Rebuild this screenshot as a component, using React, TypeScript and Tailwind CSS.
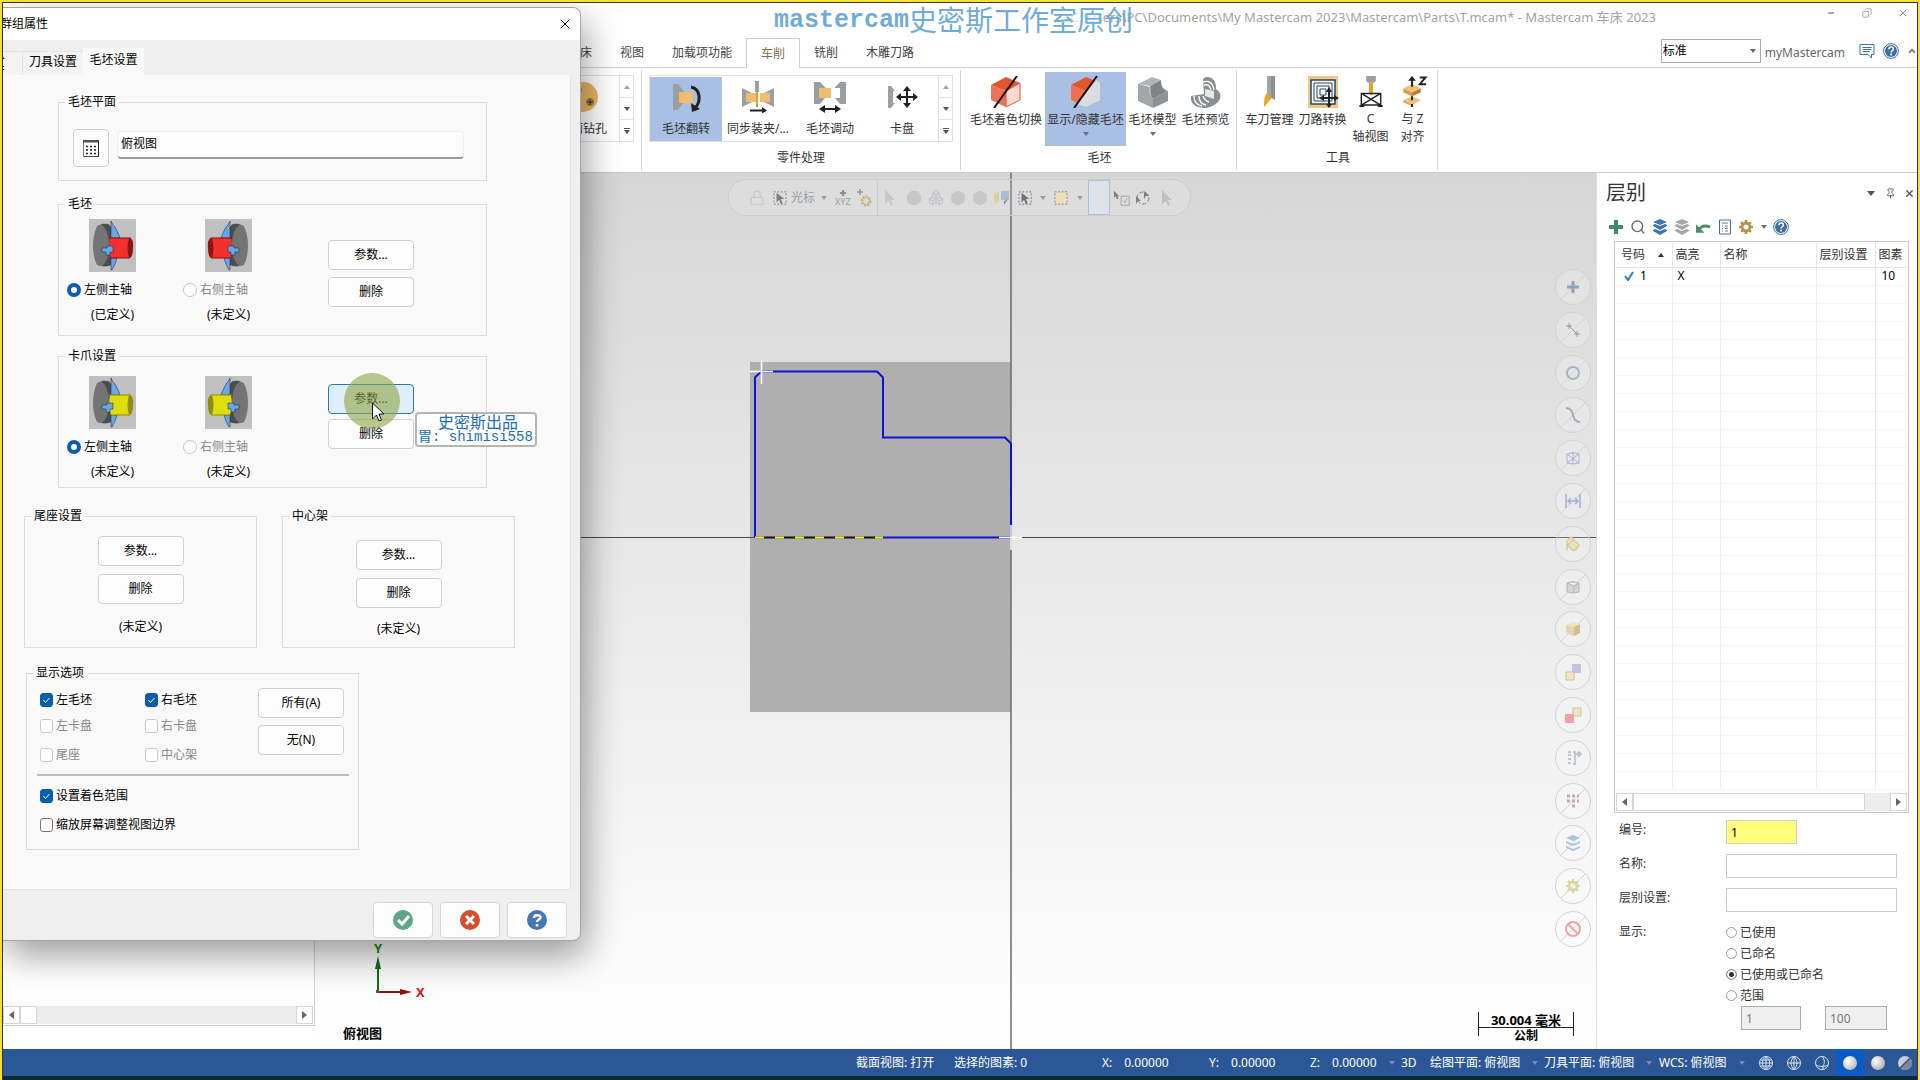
import React from 'react';
import {
  Box,
  Boxes,
  ChevronUp,
  Circle,
  Copy,
  Eraser,
  Lock,
  Pin,
  Search,
  X,
} from 'lucide-react';

interface ChildrenProps {
  children?: React.ReactNode;
}

/* ---------- shared bits ---------- */

const Caret: React.FC<{ className?: string }> = ({ className = 'text-gray-500' }) => (
  <svg viewBox="0 0 6 4" className={`w-[6px] h-1 shrink-0 ${className}`} fill="currentColor">
    <path d="M0 0h6L3 4z" />
  </svg>
);

const LayersIcon: React.FC<{ className?: string }> = ({ className = '' }) => (
  <svg viewBox="0 0 16 16" className={`w-4 h-4 ${className}`} fill="currentColor">
    <path d="M8 0l7 3-7 3-7-3z" />
    <path d="M1 6l2-1 5 2 5-2 2 1v1l-7 4-7-4z" />
    <path d="M1 11l2-1 5 2 5-2 2 1v1l-7 4-7-4z" />
  </svg>
);

const GearIcon: React.FC<{ className?: string }> = ({ className = '' }) => (
  <svg viewBox="0 0 16 16" className={`w-4 h-4 ${className}`}>
    <circle cx="8" cy="8" r="4.4" fill="none" stroke="currentColor" strokeWidth="3" />
    <g stroke="currentColor" strokeWidth="3">
      <path d="M8 0v3M8 13v3M0 8h3M13 8h3M2.4 2.4l2 2M11.6 11.6l2 2M13.6 2.4l-2 2M4.4 11.6l-2 2" />
    </g>
  </svg>
);

const HelpIcon: React.FC = () => (
  <svg viewBox="0 0 16 16" className="w-4 h-4">
    <circle cx="8" cy="8" r="7.4" fill="#fff" stroke="#3f6fa0" strokeWidth="1" />
    <circle cx="8" cy="8" r="6" fill="#3f6fa0" />
    <path d="M5.8 6.3c0-3 4.6-2.8 4.6-.2 0 1.600-2.300 1.700-2.300 3.300" fill="none" stroke="#fff" strokeWidth="1.500" />
    <circle cx="8.100" cy="11.600" r="1" fill="#fff" />
  </svg>
);

/* ---------- ribbon ---------- */

const FlipIcon: React.FC = () => (
  <svg viewBox="0 0 32 32" className="w-8 h-8">
    <path d="M3 3h5l7 9v8l-7 9H3z" fill="#9a9fa5" />
    <path d="M9 11h14v11H9z" fill="#f0bd6c" />
    <path d="M21 6c10 2 10 15 4 21" fill="none" stroke="#222" strokeWidth="3" />
    <path d="M21 22l1 9 8-3z" fill="#222" />
  </svg>
);

const SyncIcon: React.FC = () => (
  <svg viewBox="0 0 32 32" className="w-8 h-8">
    <path d="M0 7l10 5v9L0 26zM32 7l-10 5v9l10 5z" fill="#9a9fa5" />
    <path d="M4 12h10v9H4zM18 12h10v9H18z" fill="#f0bd6c" />
    <path d="M13 0h4v11h-4z" fill="#9a9fa5" />
    <path d="M14 11h2v15h-2z" fill="#dba03c" />
    <path d="M8 29.500h14" stroke="#222" strokeWidth="2" />
    <path d="M20 26l5 3.500-5 3z" fill="#222" />
  </svg>
);

const MoveStockIcon: React.FC = () => (
  <svg viewBox="0 0 32 32" className="w-8 h-8">
    <path d="M0 1h6l5 5v11l-5 6H0zM32 1h-6l-5 5v11l5 6h6z" fill="#9a9fa5" />
    <path d="M5 7h12v10H5z" fill="#f0bd6c" />
    <path d="M20 7h6v10h-6z" fill="#fff" />
    <path d="M8 28h16" stroke="#222" strokeWidth="2" />
    <path d="M11 24v8l-6-4zM21 24v8l6-4z" fill="#222" />
  </svg>
);

const ChuckIcon: React.FC = () => (
  <svg viewBox="0 0 32 32" className="w-8 h-8">
    <path d="M2 5h3l4 5H7v12h2l-4 5H2z" fill="#9a9fa5" />
    <path d="M12 16h18M21 7v18" stroke="#222" strokeWidth="2" />
    <path d="M10 16l5-4v8zM32 16l-5-4v8zM21 5l-4 5h8zM21 27l-4-5h8z" fill="#222" />
  </svg>
);

const CubeIcon: React.FC<{ half?: boolean }> = ({ half }) => (
  <svg viewBox="0 0 32 32" className="w-8 h-8">
    <path d="M1 9l15-8 14 6-14 8z" fill="#e2552c" />
    <path d="M1 9l15 6v16L1 24z" fill={half ? '#ef6f50' : '#ed7257'} />
    <path d="M16 15l14-8v17l-14 7z" fill={half ? '#d9d9dc' : '#fbd9d3'} stroke={half ? 'none' : '#e2552c'} />
    {half && <path d="M26 4l4 3v17l-14 7-10-3z" fill="#dcdcdf" />}
    <path d="M27 0L4 32" stroke="#111" strokeWidth="2" />
  </svg>
);

const StockModelIcon: React.FC = () => (
  <svg viewBox="0 0 32 32" className="w-8 h-8">
    <path d="M1 8L15 1l9 3-11 6z" fill="#b2b4b6" />
    <path d="M13 10L24 4c0 7 2 9 7 11l-15 8c-4-3-2-9-3-13z" fill="#808487" />
    <path d="M1 8l12 3c-1 6 0 9 3 12v9L1 25z" fill="#a3a6a9" />
    <path d="M16 23l15-8v10l-15 7z" fill="#8e9295" />
  </svg>
);

const PreviewIcon: React.FC = () => (
  <svg viewBox="0 0 32 32" className="w-8 h-8">
    <path d="M13 3c5-5 14 0 13 10 5 3 6 8 2 13-4 4-10 6-14 6C4 31 0 27 1 20l13-2z" fill="#8a8e91" />
    <path d="M15 13l9 2v8l-9-3z" fill="#e8e8e8" />
    <path d="M13 6c6-2 10 1 11 8M14 9c4-1 6 1 7 5M4 20c0 6 3 9 8 10M9 20c0 5 2 8 7 9M13 20c1 3 3 5 6 6" fill="none" stroke="#fff" strokeWidth="1.400" />
  </svg>
);

const ToolManagerIcon: React.FC = () => (
  <svg viewBox="0 0 32 32" className="w-8 h-8">
    <path d="M13 0h8v24l-8-5z" fill="#a3a6a9" />
    <path d="M17 0h4v24l-4-3z" fill="#8c9093" />
    <path d="M13 17l5 5-8 9c0-6 0-10 3-14z" fill="#e5a823" />
  </svg>
);

const TransformIcon: React.FC = () => (
  <svg viewBox="0 0 32 32" className="w-8 h-8">
    <path d="M1 0h30v32H1z" fill="#efc788" />
    <path d="M4 4h24v24H4z" fill="#f8f8f8" stroke="#28475f" strokeWidth="1.500" />
    <path d="M7 7h18v18H7zM10 10h12v12H10zM13 13h6v6h-6z" fill="none" stroke="#28475f" />
    <path d="M14 22h17M22 13v18" stroke="#222" strokeWidth="2" />
    <path d="M12 22l5-3v6zM32 22l-5-3v6zM22 11l-3 5h6zM22 32l-3-4h6z" fill="#222" />
  </svg>
);

const AxisViewIcon: React.FC = () => (
  <svg viewBox="0 0 32 32" className="w-8 h-8">
    <path d="M11 0h10v5l-2 2h-6l-2-2z" fill="#9a9fa5" />
    <path d="M14 7h4v10l-2 3-2-3z" fill="#dda21c" />
    <path d="M6 18h20v12H6zM6 18l20 12M26 18L6 30" fill="none" stroke="#222" strokeWidth="1.500" />
    <path d="M4 31h5M23 31h5" stroke="#222" strokeWidth="2" />
  </svg>
);

const AlignZIcon: React.FC = () => (
  <svg viewBox="0 0 32 32" className="w-8 h-8">
    <path d="M6 13l9-5 9 5-9 4zM6 25l9-4 9 4-9 5z" fill="#eec07a" />
    <path d="M6 13l9 4v4l-9-4zM6 25l9 5v1l-9-4z" fill="#d99c48" />
    <path d="M24 13l-9 4v4l9-4z" fill="#b87c32" />
    <path d="M15 4v7M15 21v4M15 29v3" stroke="#222" strokeWidth="2" />
    <path d="M15 0l-4 5h8z" fill="#222" />
    <path d="M23 1.500h6l-6 7h6.500" fill="none" stroke="#222" strokeWidth="2" />
  </svg>
);

const DrillIcon: React.FC = () => (
  <svg viewBox="0 0 32 32" className="w-8 h-8">
    <circle cx="16" cy="16" r="15" fill="#e8b765" />
    <circle cx="23" cy="21" r="4" fill="#a58345" />
    <path d="M20 21h6M23 18v6" stroke="#333" />
    <circle cx="12" cy="9" r="3" fill="#a58345" />
  </svg>
);

const RibbonTab: React.FC<ChildrenProps> = ({ children }) => (
  <button className="h-full px-[14px] text-[#444]">{children}</button>
);

const GalleryItem: React.FC<{ icon: React.ReactNode; label: string; active?: boolean }> = ({ icon, label, active }) => (
  <button className={`w-[72px] h-16 flex flex-col items-center justify-between pt-1 pb-1 whitespace-nowrap ${active ? 'bg-[#a9bfe3]' : ''}`}>
    {icon}
    <span>{label}</span>
  </button>
);

const GalleryScroll: React.FC = () => (
  <div className="w-[14px] self-stretch flex flex-col border-l border-[#e0e0e0]">
    <button aria-label="向上" className="flex-1 flex items-center justify-center border-b border-[#e0e0e0]">
      <Caret className="rotate-180 text-gray-400" />
    </button>
    <button aria-label="向下" className="flex-1 flex items-center justify-center border-b border-[#e0e0e0]">
      <Caret className="text-gray-600" />
    </button>
    <button aria-label="更多" className="flex-1 flex flex-col gap-px items-center justify-center">
      <span className="w-[6px] h-px bg-gray-600" />
      <Caret className="text-gray-600" />
    </button>
  </div>
);

const LargeButton: React.FC<{ icon: React.ReactNode; label: string; second?: string; caret?: boolean; active?: boolean; width: string }> = ({
  icon,
  label,
  second,
  caret,
  active,
  width,
}) => (
  <button className={`h-[74px] flex flex-col items-center pt-1 whitespace-nowrap leading-[18px] ${width} ${active ? 'bg-[#a9bfe3]' : ''}`}>
    {icon}
    <span className="mt-[3px]">{label}</span>
    {second && <span>{second}</span>}
    {caret && <Caret className="mt-[3px] text-gray-500" />}
  </button>
);

const RibbonGroup: React.FC<ChildrenProps & { label: string; className?: string }> = ({ label, className = '', children }) => (
  <div className={`my-[2px] flex flex-col border-r border-[#d4d4d4] ${className}`}>
    <div className="flex-1 flex items-start">{children}</div>
    <div className="h-5 text-center leading-4">{label}</div>
  </div>
);

const Ribbon: React.FC = () => (
  <header className="shrink-0 bg-white text-[#333]">
    <div className="h-[35px] flex items-start">
      <div className="flex-1 flex justify-end pt-[6px] text-[13px] text-[#a3a3a3] whitespace-nowrap overflow-hidden">
        <span className="text-[#e2e2e2]">C:\Us</span>
        <span>ers\PC\Documents\My Mastercam 2023\Mastercam\Parts\T.mcam* - Mastercam 车床 2023</span>
      </div>
      <div className="w-[261px] flex justify-end items-center pt-[2px] pr-[6px] gap-5 text-[#999]">
        <button aria-label="最小化" className="w-4 h-4 flex items-center justify-center">
          <span className="w-[6px] h-[2px] bg-[#aaa]" />
        </button>
        <button aria-label="还原" className="w-4 h-4 flex items-center justify-center">
          <Copy className="w-[10px] h-[10px] -scale-x-100" />
        </button>
        <button aria-label="关闭" className="w-4 h-4 flex items-center justify-center">
          <X className="w-3 h-3" />
        </button>
      </div>
    </div>
    <nav className="h-[30px] flex items-stretch border-b border-[#cfcfcf] pl-[551px]">
      <RibbonTab>机床</RibbonTab>
      <RibbonTab>视图</RibbonTab>
      <RibbonTab>加载项功能</RibbonTab>
      <button className="-mb-px px-[14px] bg-white border border-b-0 border-[#cfcfcf] text-[#7d6f4b]">车削</button>
      <RibbonTab>铣削</RibbonTab>
      <RibbonTab>木雕刀路</RibbonTab>
      <div className="flex-1 flex justify-end items-center text-[#666]">
        <div className="w-[100px] h-6 -mt-1 relative flex items-center">
          <select aria-label="标准" className="w-full h-full appearance-none border border-[#aaa] bg-white px-px text-black">
            <option>标准</option>
          </select>
          <Caret className="absolute right-[5px] top-[10px]" />
        </div>
        <a href="#my" className="ml-1">myMastercam</a>
        <button aria-label="消息" className="ml-[14px] -mt-1">
          <svg viewBox="0 0 16 16" className="w-4 h-4" fill="none" stroke="#3f6fa0">
            <path d="M1 1.500h14v10h-2.500V15L9 11.500H1zM3.500 4.500h9M3.500 6.500h9M3.500 8.500h7" />
          </svg>
        </button>
        <button aria-label="帮助" className="ml-2 -mt-1"><HelpIcon /></button>
        <button aria-label="折叠功能区" className="ml-2 -mt-1"><ChevronUp className="w-[10px] h-[10px]" strokeWidth={4} /></button>
      </div>
    </nav>
    <div className="h-[105px] flex border-b border-[#c8c8c8]">
      <RibbonGroup label="" className="w-[639px] pr-[7px]">
        <div className="flex-1" />
        <div className="mt-[5px] h-[67px] flex items-center border border-l-0 border-[#e0e0e0]">
          <GalleryItem icon={<DrillIcon />} label="端面钻孔" />
          <GalleryScroll />
        </div>
      </RibbonGroup>
      <RibbonGroup label="零件处理" className="px-[7px]">
        <div className="mt-[5px] h-[67px] flex items-center border border-[#e0e0e0]">
          <GalleryItem icon={<FlipIcon />} label="毛坯翻转" active />
          <GalleryItem icon={<SyncIcon />} label="同步装夹/..." />
          <GalleryItem icon={<MoveStockIcon />} label="毛坯调动" />
          <GalleryItem icon={<ChuckIcon />} label="卡盘" />
          <GalleryScroll />
        </div>
      </RibbonGroup>
      <RibbonGroup label="毛坯" className="pl-[6px] pr-1">
        <div className="mt-[2px] flex">
          <LargeButton icon={<CubeIcon />} label="毛坯着色切换" width="w-[78px]" />
          <LargeButton icon={<CubeIcon half />} label="显示/隐藏毛坯" caret active width="w-[81px]" />
          <LargeButton icon={<StockModelIcon />} label="毛坯模型" caret width="w-[53px]" />
          <LargeButton icon={<PreviewIcon />} label="毛坯预览" width="w-[53px]" />
        </div>
      </RibbonGroup>
      <RibbonGroup label="工具" className="pl-[6px] pr-1">
        <div className="mt-[2px] flex">
          <LargeButton icon={<ToolManagerIcon />} label="车刀管理" width="w-[53px]" />
          <LargeButton icon={<TransformIcon />} label="刀路转换" width="w-[53px]" />
          <LargeButton icon={<AxisViewIcon />} label="C" second="轴视图" width="w-[43px]" />
          <LargeButton icon={<AlignZIcon />} label="与 Z" second="对齐" width="w-[41px]" />
        </div>
      </RibbonGroup>
    </div>
  </header>
);

/* ---------- scroll bar ---------- */

const ScrollBar: React.FC<{ thumb: string }> = ({ thumb }) => (
  <div className="h-[18px] flex bg-[#ececec] text-[#666]">
    <button aria-label="向左滚动" className="w-[17px] flex items-center justify-center bg-white border border-[#d5d5d5]">
      <svg viewBox="0 0 5 8" className="w-[5px] h-2" fill="currentColor"><path d="M5 0v8L0 4z" /></svg>
    </button>
    <div className={`bg-white border border-[#d5d5d5] ${thumb}`} />
    <div className="flex-1" />
    <button aria-label="向右滚动" className="w-[17px] flex items-center justify-center bg-white border border-[#d5d5d5]">
      <svg viewBox="0 0 5 8" className="w-[5px] h-2" fill="currentColor"><path d="M0 0v8l5-4z" /></svg>
    </button>
  </div>
);

/* ---------- graphics view ---------- */

const ArrowIcon: React.FC<{ className?: string }> = ({ className = '' }) => (
  <svg viewBox="0 0 12 16" className={`w-3 h-4 ${className}`} fill="currentColor">
    <path d="M1 0l10 10H7l2 5-2 1-2-5-4 3z" />
  </svg>
);

const BoxedArrow: React.FC<{ className?: string }> = ({ className = '' }) => (
  <svg viewBox="0 0 16 16" className={`w-[14px] h-[14px] ${className}`}>
    <path d="M1 1h14v14H1z" fill="none" stroke="#333" strokeDasharray="2 2" />
    <path d="M4 2l9 7H9l2 5-2 1-2-5-3 3z" fill="#444" />
  </svg>
);

const SelectionBar: React.FC = () => (
  <div className="absolute left-[413px] top-[6px] h-[37px] w-[463px] flex items-center rounded-full border border-[#cbcbcb] bg-white/15 pl-5 text-gray-500">
    <div className="flex items-center opacity-60">
      <Lock className="w-4 h-4 opacity-30" />
      <BoxedArrow className="ml-2" />
      <span className="ml-1">光标</span>
      <Caret className="ml-[6px]" />
      <span className="ml-2 flex flex-col items-center gap-px">
        <svg viewBox="0 0 6 6" className="w-[6px] h-[6px]"><path d="M3 0v6M0 3h6" stroke="#555" strokeWidth="2" /></svg>
        <span className="text-[9px] leading-[9px]">XYZ</span>
      </span>
      <svg viewBox="0 0 16 18" className="ml-[6px] w-4 h-[18px]" fill="none">
        <path d="M3 0v6M0 3h6" stroke="#444" />
        <circle cx="9" cy="12" r="4" stroke="#b79a3e" strokeWidth="3" strokeDasharray="2 1" />
      </svg>
    </div>
    <div className="ml-1 h-full border-l border-[#cbcbcb]" />
    <div className="ml-[6px] flex items-center gap-[6px] opacity-20">
      <ArrowIcon className="mr-1" />
      <Circle className="w-4 h-4" fill="currentColor" />
      <Boxes className="w-4 h-4" />
      <Box className="w-4 h-4" fill="currentColor" />
      <Box className="w-4 h-4" fill="currentColor" />
    </div>
    <svg viewBox="0 0 16 16" className="ml-[6px] w-4 h-4 opacity-50">
      <path d="M0 4l5-3v11l-5 2z" fill="#d6c46a" />
      <path d="M7 1h8v9H7z" fill="#7f9cc9" />
      <path d="M14 9l-4 6v-4z" fill="#444" />
    </svg>
    <BoxedArrow className="ml-2 opacity-70" />
    <Caret className="ml-2 opacity-60" />
    <svg viewBox="0 0 16 16" className="ml-2 w-[14px] h-[14px] opacity-70">
      <path d="M1 1h14v14H1z" fill="#f3dfa9" stroke="#444" strokeDasharray="2 2" />
    </svg>
    <Caret className="ml-[9px] opacity-60" />
    <button aria-label="选择过滤" className="ml-[5px] w-[22px] h-full border border-[#a9c3dd] bg-[#dce6ef]/60" />
    <svg viewBox="0 0 20 16" className="ml-[3px] w-[18px] h-4 opacity-60">
      <path d="M1 0l6 6H5l1 3-2 0-1-3-2 2z" fill="#444" />
      <path d="M9 6h9v10H9zM11 11l2 2 3-5" fill="none" stroke="#777" />
    </svg>
    <svg viewBox="0 0 16 16" className="ml-1 w-4 h-4 opacity-60">
      <circle cx="8" cy="8" r="6" fill="none" stroke="#444" strokeDasharray="4 2" />
      <path d="M1 6l5 5H3l-2 3zM9 1l5 5h-3l-2 3z" fill="#444" />
    </svg>
    <ArrowIcon className="ml-[10px] opacity-25" />
  </div>
);

const sideIcons: { name: string; icon: React.ReactNode; crossed?: boolean }[] = [
  { name: '点', crossed: true, icon: <path d="M8 2v12M2 8h12" stroke="#8ea3b5" strokeWidth="3" /> },
  { name: '线', crossed: true, icon: <path d="M1 4h6M4 1v6M4 4l8 8M9 12h6M12 9v6" stroke="#999" /> },
  { name: '圆', crossed: true, icon: <circle cx="8" cy="8" r="6" stroke="#9db9c9" strokeWidth="2" /> },
  { name: '曲线', crossed: true, icon: <path d="M1 1c10 0 4 14 14 14" stroke="#9db0bd" strokeWidth="2" /> },
  { name: '曲面', crossed: true, icon: <path d="M2 4q6-3 12 0v9q-6 2-12 0zM2 4l12 9M14 4L2 13M8 3v11" stroke="#a9b1da" /> },
  { name: '标注', crossed: true, icon: <path d="M1 1v14M15 1v14M3 8h10M6 5L3 8l3 3M10 5l3 3-3 3" stroke="#a4aedb" strokeWidth="1.500" /> },
  { name: '实体', crossed: true, icon: <path d="M2 4q6-3 12 0v9q-6 2-12 0zM2 4l7 3 5-3M9 7v7" fill="#d5d5d0" stroke="#b5b5b0" /> },
  {
    name: '网格',
    crossed: true,
    icon: <><path d="M1 4l7-3 7 2-6 3z" fill="#eee3c4" /><path d="M1 4l8 2v9l-8-3z" fill="#e3d6ae" /><path d="M9 6l6-3v9l-6 3z" fill="#d0bf8f" /></>,
  },
  { name: '结果', icon: <><path d="M7 0h9v9H7z" fill="#c5c0df" /><path d="M1 8h8v8H1z" fill="#ede6c8" stroke="#cfc38c" /></> },
  { name: '转换', icon: <><path d="M8 1h8v8H8z" fill="#ede6c8" stroke="#cfc38c" /><path d="M0 7h9v9H0z" fill="#f3a2a2" /></> },
  { name: '群组', icon: <path d="M3 2h3M3 5h3M3 9h3M3 13h3M8 2h2v12H8M12 4l2-2 2 2-2 2z" stroke="#a9bcc9" strokeWidth="1.500" /> },
  { name: '颜色', crossed: true, icon: <path d="M2 3h3M7 3h3M12 3h2M2 8h3M7 8h3M12 8h2M7 13h3" stroke="#cda5ad" strokeWidth="3" /> },
  { name: '层别', crossed: true, icon: <path d="M8 0l7 3-7 3-7-3zM1 6l7 3 7-3v2l-7 3-7-3zM1 11l7 3 7-3v2l-7 3-7-3z" fill="#a9c4e0" /> },
  {
    name: '设置',
    crossed: true,
    icon: <><circle cx="8" cy="8" r="4" stroke="#dcd6a5" strokeWidth="3" /><path d="M8 1v3M8 12v3M1 8h3M12 8h3M3 3l2 2M11 11l2 2M13 3l-2 2M5 11l-2 2" stroke="#dcd6a5" strokeWidth="2" /></>,
  },
  { name: '清除', crossed: true, icon: <><circle cx="8" cy="8" r="7" stroke="#eda6a6" strokeWidth="2" /><path d="M3 3l10 10" stroke="#eda6a6" strokeWidth="2" /></> },
];

const SideButton: React.FC<ChildrenProps & { name: string; crossed?: boolean }> = ({ name, crossed, children }) => (
  <button aria-label={name} className="w-9 h-9 rounded-full border border-[#d3d3d3] bg-white/20 flex items-center justify-center">
    <svg viewBox="-9 -9 34 34" className="w-[34px] h-[34px]" fill="none">
      {crossed && <path d="M-4 20L20-4" stroke="#d3d3d3" />}
      {children}
    </svg>
  </button>
);

const SideBar: React.FC = () => (
  <div className="absolute right-[5px] top-[96px] h-[678px] flex flex-col justify-between">
    {sideIcons.slice(0, 6).map((s) => (
      <SideButton key={s.name} name={s.name} crossed={s.crossed}>{s.icon}</SideButton>
    ))}
    <button aria-label="橡皮擦" className="w-9 h-9 rounded-full border border-[#d3d3d3] bg-white/20 flex items-center justify-center text-[#dcc89d]">
      <Eraser className="w-4 h-4 rotate-90" fill="#ece0c4" />
    </button>
    {sideIcons.slice(6).map((s) => (
      <SideButton key={s.name} name={s.name} crossed={s.crossed}>{s.icon}</SideButton>
    ))}
  </div>
);

const Drawing: React.FC = () => (
  <svg className="absolute inset-0 w-full h-full" fill="none">
    <path d="M435 189h261v350H435z" fill="#afafaf" />
    <line x1="0" x2="100%" y1="364.500" y2="364.500" stroke="#4a4a4a" />
    <path d="M696 0v900" stroke="#6a6a6a" strokeWidth="1.500" />
    <path d="M440 364.500v-160l6-6h116l6 6v60h122l6 6v94H568" stroke="#1010dc" strokeWidth="2" />
    <path d="M440 364.500h128" stroke="#111" strokeWidth="2" />
    <path d="M440 364.500h128" stroke="#f4ee3c" strokeWidth="2" strokeDasharray="9 11" />
    <path d="M435 198.500h23M446.500 187v24M684 364.500h23M696 352v25" stroke="#fff" strokeWidth="1.500" />
    {/* axis gizmo */}
    <path d="M63 819v-24" stroke="#146b1f" strokeWidth="2" />
    <path d="M63 783l-3 13h6z" fill="#146b1f" />
    <path d="M63 819h24" stroke="#8d1212" strokeWidth="2" />
    <path d="M97 819l-12-3v6z" fill="#8d1212" />
    <path d="M61 817h3v3h-3z" fill="#555" />
    <text x="59" y="780" fontSize="13" fontWeight="700" fill="#1b8a1f">Y</text>
    <text x="101" y="824" fontSize="13" fontWeight="700" fill="#dc1414">X</text>
  </svg>
);

const GraphicsView: React.FC = () => (
  <main className="relative flex-1 overflow-hidden bg-linear-to-b from-[#d6d6d6] via-[#ebebeb] to-white">
    <Drawing />
    <SelectionBar />
    <SideBar />
    <p className="absolute left-7 bottom-2 text-[13px] leading-4 font-bold text-black">俯视图</p>
    <div className="absolute right-[22px] bottom-[5px] w-24 text-center text-[13px] leading-4 font-bold text-black">
      <p>30.004 毫米</p>
      <svg viewBox="0 0 96 24" className="absolute left-0 top-0 w-24 h-6" fill="none">
        <path d="M.5 0v24M95.500 0v24M0 15.500h96" stroke="#222" />
      </svg>
      <p className="text-xs leading-4">公制</p>
    </div>
  </main>
);

/* ---------- layer panel ---------- */

const emptyRows = Array.from({ length: 28 }, (_, i) => i);

const LayerTable: React.FC = () => (
  <div className="ml-[17px] mr-2 flex-1 flex flex-col border border-[#c9c9c9] p-px">
    <div className="flex-1">
      <table className="w-full table-fixed border-collapse text-left text-black">
        <thead>
          <tr className="h-6 border-b border-[#e5e5e5] text-[#333]">
            <th className="w-[56px] pl-[5px] font-normal">
              <span className="flex items-center justify-between pr-2">号码<Caret className="rotate-180" /></span>
            </th>
            <th className="w-12 pl-[3px] font-normal border-l border-[#e5e5e5]">高亮</th>
            <th className="pl-[3px] font-normal border-l border-[#e5e5e5]">名称</th>
            <th className="w-[59px] pl-[3px] font-normal border-l border-[#e5e5e5]">层别设置</th>
            <th className="w-8 pl-[3px] font-normal border-l border-[#e5e5e5]">图素</th>
          </tr>
        </thead>
        <tbody>
          <tr className="h-[18px] border-b border-[#f2f2f2]">
            <td>
              <span className="flex items-center gap-[6px] pl-2 leading-4">
                <svg viewBox="0 0 10 10" className="w-[10px] h-[10px]"><path d="M1 5l3 4 5-8" fill="none" stroke="#2f7cb5" strokeWidth="2" /></svg>
                1
              </span>
            </td>
            <td className="pl-[5px] border-l border-[#ececec] leading-4">X</td>
            <td className="border-l border-[#ececec]" />
            <td className="border-l border-[#ececec]" />
            <td className="pl-[6px] border-l border-[#ececec] leading-4">10</td>
          </tr>
          {emptyRows.map((row) => (
            <tr key={row} className="h-[18px] border-b border-[#f4f4f4]">
              <td />
              <td className="border-l border-[#ececec]" />
              <td className="border-l border-[#ececec]" />
              <td className="border-l border-[#ececec]" />
              <td className="border-l border-[#ececec]" />
            </tr>
          ))}
        </tbody>
      </table>
    </div>
    <ScrollBar thumb="w-[232px]" />
  </div>
);

const LayerRadio: React.FC<{ label: string; checked?: boolean }> = ({ label, checked }) => (
  <label className="h-[21px] flex items-center gap-[3px]">
    <input
      type="radio"
      name="layer-display"
      defaultChecked={checked}
      className="appearance-none w-[11px] h-[11px] rounded-full border border-[#999] bg-white checked:bg-[#333] checked:shadow-[inset_0_0_0_2px_white]"
    />
    {label}
  </label>
);

const LayerPanel: React.FC = () => (
  <aside className="w-[321px] shrink-0 flex flex-col bg-white border-l border-[#ddd] text-xs text-[#333]">
    <div className="h-10 pl-[9px] flex items-center gap-[3px]">
      <h2 className="flex-1 text-xl">层别</h2>
      <button aria-label="选项" className="w-4 flex justify-center">
        <svg viewBox="0 0 8 5" className="w-2 h-[5px]" fill="#555"><path d="M0 0h8L4 5z" /></svg>
      </button>
      <button aria-label="固定" className="w-4 flex justify-center"><Pin className="w-[11px] h-[11px] text-[#555]" /></button>
      <button aria-label="关闭面板" className="w-4 flex justify-center"><X className="w-[11px] h-[11px] text-[#555]" strokeWidth={3} /></button>
    </div>
    <div className="h-7 pl-[11px] flex items-center gap-[6px]">
      <button aria-label="新建层别">
        <svg viewBox="0 0 16 16" className="w-4 h-4"><path d="M8 1v14M1 8h14" stroke="#3f8a66" strokeWidth="4" /></svg>
      </button>
      <button aria-label="查找"><Search className="w-4 h-4 text-[#666]" /></button>
      <button aria-label="显示层别"><LayersIcon className="text-[#3d74b0]" /></button>
      <button aria-label="隐藏层别"><LayersIcon className="text-[#a5a5a5]" /></button>
      <button aria-label="撤销">
        <svg viewBox="0 0 16 16" className="w-[15px] h-4">
          <path d="M0 5v9h9z" fill="#4a8c6a" />
          <path d="M3 11c3-5 7-5 12-3" fill="none" stroke="#4a8c6a" strokeWidth="3" />
        </svg>
      </button>
      <button aria-label="报告">
        <svg viewBox="0 0 16 16" className="w-4 h-4" fill="none">
          <path d="M2.500 1h11v14h-11z" stroke="#3f6fa0" />
          <path d="M5 4h6M5 7h1M8 7h3M5 9.500h1M8 9.500h3M5 12h1M8 12h3" stroke="#777" />
        </svg>
      </button>
      <button aria-label="设置" className="flex items-center gap-2">
        <GearIcon className="w-[14px] h-[14px] text-[#b98f45]" />
        <Caret />
      </button>
      <button aria-label="帮助"><HelpIcon /></button>
    </div>
    <LayerTable />
    <div className="pl-[22px] pt-[7px] h-[236px] shrink-0 grid grid-cols-[107px_1fr] auto-rows-min gap-y-[10px]">
      <label htmlFor="layer-number" className="leading-5">编号:</label>
      <input id="layer-number" defaultValue="1" className="w-[71px] h-6 border border-[#d0d0c0] bg-[#ffff7d] px-1 text-black" />
      <label htmlFor="layer-name" className="leading-5">名称:</label>
      <input id="layer-name" className="w-[171px] h-6 border border-[#ccc] bg-white px-1" />
      <label htmlFor="layer-set" className="leading-5">层别设置:</label>
      <input id="layer-set" className="w-[171px] h-6 border border-[#ccc] bg-white px-1" />
      <span className="leading-5">显示:</span>
      <div>
        <LayerRadio label="已使用" />
        <LayerRadio label="已命名" />
        <LayerRadio label="已使用或已命名" checked />
        <LayerRadio label="范围" />
        <div className="ml-[15px] flex gap-6">
          <input aria-label="范围起始" disabled defaultValue="1" className="w-[60px] h-6 border border-[#aaa] bg-[#efefef] px-1 text-[#777]" />
          <input aria-label="范围结束" disabled defaultValue="100" className="w-[62px] h-6 border border-[#aaa] bg-[#efefef] px-1 text-[#777]" />
        </div>
      </div>
    </div>
  </aside>
);

/* ---------- status bar ---------- */

const Globe: React.FC<{ lines: string }> = ({ lines }) => (
  <svg viewBox="0 0 14 14" className="w-[14px] h-[14px]" fill="none" stroke="#dbe6f5">
    <circle cx="7" cy="7" r="6.500" />
    <path d={lines} />
  </svg>
);

const StatusBar: React.FC = () => (
  <footer className="h-[31px] shrink-0 flex justify-end items-stretch bg-[#2b5797] border-b-4 border-[#0b2b36] text-xs text-white whitespace-nowrap *:flex *:items-center">
    <span className="w-[98px]">截面视图: 打开</span>
    <span className="w-[148px]">选择的图素: 0</span>
    <span className="w-[107px] gap-3">X:<span>0.00000</span></span>
    <span className="w-[101px] gap-3">Y:<span>0.00000</span></span>
    <span className="w-[91px] gap-3">Z:<span>0.00000</span><Caret className="text-[#6d8dbd]" /></span>
    <span className="w-[29px]">3D</span>
    <span className="w-[114px] gap-3">绘图平面: 俯视图<Caret className="text-[#6d8dbd]" /></span>
    <span className="w-[115px] gap-3">刀具平面: 俯视图<Caret className="text-[#6d8dbd]" /></span>
    <span className="w-[93px] gap-3">WCS: 俯视图<Caret className="text-[#6d8dbd]" /></span>
    <button aria-label="线框" className="w-7 justify-center"><Globe lines="M7 .5v13M.5 7h13M7 .5c-5 4-5 9 0 13M7 .5c5 4 5 9 0 13M1.500 4h11M1.500 10h11" /></button>
    <button aria-label="隐藏线" className="w-7 justify-center"><Globe lines="M7 .5v13M.5 7h13M7 .5c-4 4-4 9 0 13M7 .5c4 4 4 9 0 13" /></button>
    <button aria-label="无隐藏线" className="w-7 justify-center"><Globe lines="M7 .5c3 3 3 7 1 9M1 9c4 2 8 2 12 0M8 9.500v4" /></button>
    <button aria-label="着色" className="w-7 justify-center bg-[#0a5cc4]"><span className="w-[14px] h-[14px] rounded-full bg-radial-[at_35%_35%] from-white to-[#a8a8a8]" /></button>
    <button aria-label="着色边框" className="w-7 justify-center"><span className="w-[14px] h-[14px] rounded-full bg-radial-[at_35%_35%] from-white to-[#999]" /></button>
    <button aria-label="半透明" className="w-[25px] justify-center">
      <svg viewBox="0 0 14 14" className="w-[14px] h-[14px]">
        <circle cx="7" cy="7" r="7" fill="#c9cdd3" />
        <path d="M12 2A7 7 0 0 1 2 12z" fill="#7f8790" />
        <path d="M13 1L1 13" stroke="#2b5797" strokeWidth="1.500" />
      </svg>
    </button>
  </footer>
);

/* ---------- machine group dialog ---------- */

const Group: React.FC<ChildrenProps & { legend: string; className?: string }> = ({ legend, className = '', children }) => (
  <fieldset className={`border border-[#dcdcdc] ${className}`}>
    <legend className="ml-[6px] px-[3px] leading-4">{legend}</legend>
    {children}
  </fieldset>
);

const PushButton: React.FC<ChildrenProps & { focused?: boolean; className?: string }> = ({ focused, className = '', children }) => (
  <button
    className={`w-[86px] h-[30px] rounded border ${focused ? 'border-[#2a7ab8] bg-[#e0eef9]' : 'border-[#d0d0d0] bg-[#fdfdfd]'} ${className}`}
  >
    {children}
  </button>
);

const SpindlePicture: React.FC<{ right?: boolean; color: string; dark: string }> = ({ right, color, dark }) => (
  <svg viewBox="0 0 47 53" className={`w-[47px] h-[53px] bg-[#c0c0c0] ${right ? '-scale-x-100' : ''}`}>
    <path d="M8 7q5-3 12-2l4 8v26l-5 8q-7 1-11-1-4-8-4-19T8 7z" fill="#747474" />
    <path d="M12 5q7-1 10 3v38q-3 2-9 1 7-6 7-21T12 5z" fill="#4d4d4d" />
    <path d="M22 2l2 4 2 2 3 6 2 5h-9zM22 39h6l-2 6-3 6h-1z" fill="#6aa7e4" stroke="#1f3550" strokeWidth=".6" />
    <path d="M21 19h20q5 8 0 20H22q-3-10-1-20z" fill={color} />
    <path d="M40 19q5 0 4 10 0 10-4 10-3-10 0-20z" fill={dark} />
    <path d="M20 19h22M22 39h19" stroke={dark} />
    <path d="M13 29h5v-2h6v6h-3v3h-4v-3h-4z" fill="#6aa7e4" stroke="#1f3550" strokeWidth=".6" />
  </svg>
);

const Spindle: React.FC<{ name: string; label: string; state: string; color: string; dark: string; right?: boolean }> = ({
  name,
  label,
  state,
  color,
  dark,
  right,
}) => (
  <div className="w-[116px] flex flex-col items-start">
    <div className="ml-[22px]"><SpindlePicture right={right} color={color} dark={dark} /></div>
    <label className={`mt-[9px] h-[18px] flex items-center gap-[3px] ${right ? 'text-[#888]' : ''}`}>
      <input
        type="radio"
        name={name}
        disabled={right}
        defaultChecked={!right}
        className="appearance-none w-[14px] h-[14px] rounded-full border border-[#c5c5c5] bg-white checked:border-4 checked:border-[#0b5cad]"
      />
      {label}
    </label>
    <span className="ml-6 mt-[7px] leading-[18px]">{state}</span>
  </div>
);

const CheckBox: React.FC<{ label: string; checked?: boolean; disabled?: boolean }> = ({ label, checked, disabled }) => (
  <label className={`flex items-center gap-[3px] leading-4 ${disabled ? 'text-[#888]' : ''}`}>
    <span className="relative w-[13px] h-[14px]">
      <input
        type="checkbox"
        disabled={disabled}
        defaultChecked={checked}
        className="block appearance-none w-[13px] h-[14px] rounded-[3px] border border-[#777] bg-white checked:bg-[#0b5cad] checked:border-[#0b5cad] disabled:border-[#c8c8c8]"
      />
      {checked && (
        <svg viewBox="0 0 13 14" className="absolute inset-0 w-[13px] h-[14px] pointer-events-none">
          <path d="M3.500 7l2 2.500 4-4.500" fill="none" stroke="#fff" />
        </svg>
      )}
    </span>
    {label}
  </label>
);

const FooterButton: React.FC<ChildrenProps & { name: string; fill: string }> = ({ name, fill, children }) => (
  <button aria-label={name} className="w-[60px] h-9 rounded border border-[#d6d6d6] bg-[#fdfdfd] flex items-center justify-center">
    <svg viewBox="0 0 20 20" className="w-5 h-5" fill="none" stroke="#fff" strokeWidth="3">
      <circle cx="10" cy="10" r="10" fill={fill} stroke="none" />
      {children}
    </svg>
  </button>
);

const GroupDialog: React.FC = () => (
  <section
    role="dialog"
    aria-label="群组属性"
    className="absolute left-0 top-1 w-[578px] flex flex-col overflow-hidden rounded-r-lg border border-l-0 border-[#a5a5a5] bg-[#efefef] text-xs text-black shadow-[4px_14px_36px_rgba(0,0,0,0.4)]"
  >
    <div className="h-[31px] -ml-[3px] pr-[7px] flex items-center justify-between bg-white">
      <span>群组属性</span>
      <button aria-label="关闭" className="w-4 h-4 flex items-center justify-center"><X className="w-4 h-4" strokeWidth={1.500} /></button>
    </div>
    <div className="h-[36px] border-t border-white flex items-end">
      <button className="w-5 h-6 overflow-hidden flex items-center justify-end pb-1 pr-[17px] border border-l-0 border-b-0 border-[#e3e3e3] bg-[#f3f3f3]">文件</button>
      <button className="w-[60px] h-6 pb-1 border border-x-0 border-b-0 border-[#e3e3e3] bg-[#f3f3f3]">刀具设置</button>
      <button className="w-[61px] h-[27px] pb-1 bg-[#f9f9f9]">毛坯设置</button>
    </div>
    <div className="h-[815px] mr-[9px] pt-[19px] border border-l-0 border-t-0 border-[#e2e2e2] bg-[#f9f9f9]">
      <Group legend="毛坯平面" className="ml-[55px] w-[429px] h-[87px]">
        <div className="flex pl-[14px] pt-[19px] gap-2">
          <button aria-label="选择平面" className="w-9 h-[38px] rounded border border-[#d0d0d0] bg-[#fdfdfd] flex items-center justify-center">
            <svg viewBox="0 0 16 17" className="w-4 h-[17px]" fill="none">
              <path d="M.5.5h15v16H.5z" fill="#fff" stroke="#777" />
              <path d="M0 1h16" stroke="#555" strokeWidth="3" />
              <path d="M3 6.500h11M3 10h11M3 13.500h11" stroke="#222" strokeDasharray="2 2" strokeWidth="1.500" />
              <path d="M15.500 1v16H1" stroke="#222" />
            </svg>
          </button>
          <input
            aria-label="毛坯平面"
            defaultValue="俯视图"
            className="mt-[2px] w-[347px] h-7 rounded-sm border border-[#eee] border-b-2 border-b-[#999] bg-[#fcfcfc] px-[3px] pb-1"
          />
        </div>
      </Group>
      <Group legend="毛坯" className="ml-[55px] mt-[15px] w-[429px] h-[140px]">
        <div className="flex pl-2 pt-[7px]">
          <Spindle name="stock-side" label="左侧主轴" state="(已定义)" color="#f5302c" dark="#8d1512" />
          <Spindle name="stock-side" label="右侧主轴" state="(未定义)" color="#f5302c" dark="#8d1512" right />
          <div className="ml-[29px] mt-[21px] flex flex-col gap-[7px]">
            <PushButton>参数...</PushButton>
            <PushButton>删除</PushButton>
          </div>
        </div>
      </Group>
      <Group legend="卡爪设置" className="ml-[55px] mt-3 w-[429px] h-[140px]">
        <div className="flex pl-2 pt-3">
          <Spindle name="chuck-side" label="左侧主轴" state="(未定义)" color="#dede0c" dark="#8d8d08" />
          <Spindle name="chuck-side" label="右侧主轴" state="(未定义)" color="#dede0c" dark="#8d8d08" right />
          <div className="ml-[29px] mt-2 flex flex-col gap-[5px]">
            <PushButton focused>参数...</PushButton>
            <PushButton>删除</PushButton>
          </div>
        </div>
      </Group>
      <div className="ml-[21px] mt-5 flex gap-[25px]">
        <Group legend="尾座设置" className="w-[233px] h-[140px]">
          <div className="flex flex-col items-center gap-2 pt-3">
            <PushButton>参数...</PushButton>
            <PushButton>删除</PushButton>
            <span className="mt-[6px] leading-[18px]">(未定义)</span>
          </div>
        </Group>
        <Group legend="中心架" className="w-[233px] h-[140px]">
          <div className="flex flex-col items-center gap-2 pt-4">
            <PushButton>参数...</PushButton>
            <PushButton>删除</PushButton>
            <span className="mt-1 leading-[18px]">(未定义)</span>
          </div>
        </Group>
      </div>
      <Group legend="显示选项" className="ml-[23px] mt-[17px] w-[333px] h-[185px]">
        <div className="ml-[10px] mr-[9px] pl-[3px] pt-[7px] pb-[11px] flex items-start border-b-2 border-[#bcbcbc]">
          <div className="grid grid-cols-[105px_113px] grid-rows-[26px_29px_16px] items-start pt-1">
            <CheckBox label="左毛坯" checked />
            <CheckBox label="右毛坯" checked />
            <CheckBox label="左卡盘" disabled />
            <CheckBox label="右卡盘" disabled />
            <CheckBox label="尾座" disabled />
            <CheckBox label="中心架" disabled />
          </div>
          <div className="flex flex-col gap-[7px]">
            <PushButton>所有(A)</PushButton>
            <PushButton>无(N)</PushButton>
          </div>
        </div>
        <div className="ml-[13px] mt-3 flex flex-col gap-[13px]">
          <CheckBox label="设置着色范围" checked />
          <CheckBox label="缩放屏幕调整视图边界" />
        </div>
      </Group>
    </div>
    <div className="h-[50px] pt-3 pr-[13px] flex items-start justify-end gap-[7px]">
      <FooterButton name="确定" fill="#5fa58a"><path d="M5 10l4 4 7-8" /></FooterButton>
      <FooterButton name="取消" fill="#d0502e"><path d="M6 6l8 8M14 6l-8 8" /></FooterButton>
      <FooterButton name="帮助" fill="#4477b3"><path d="M7 8c0-4 6.500-3.500 6.500-.5C13.500 9.500 10 9.500 10 12M10 14v2.500" strokeWidth="2.500" /></FooterButton>
    </div>
  </section>
);

/* ---------- pointer and branding overlays ---------- */

const Pointer: React.FC = () => (
  <div className="absolute left-[341px] top-[370px] w-14 h-14 rounded-full bg-[#8ba342]/60 pointer-events-none">
    <svg viewBox="0 0 12 19" className="absolute left-7 top-[29px] w-3 h-5">
      <path d="M.5.5v16l4-4 2.500 6 2.500-1-2.500-6h5z" fill="#fff" stroke="#111" />
    </svg>
  </div>
);

const Stamp: React.FC = () => (
  <div className="absolute left-[412px] top-[409px] w-[122px] h-[35px] rounded border-2 border-[#b5b5b5] bg-white/80 text-[#1c6fb5] leading-[15px] whitespace-nowrap pointer-events-none">
    <p className="pl-[21px] text-base leading-4">史密斯出品</p>
    <p className="pl-px text-sm leading-[14px] font-['Liberation_Mono','Noto_Sans_CJK_SC',monospace]">胃: shimisi558</p>
  </div>
);

const Watermark: React.FC = () => (
  <div className="absolute left-[771px] top-[2px] flex items-center h-8 text-[28px] whitespace-nowrap text-[#5fa3d6] opacity-90 pointer-events-none">
    <span className="font-['Liberation_Mono',monospace] font-bold text-[25px]">mastercam</span>
    <span>史密斯工作室原创</span>
  </div>
);

export default function App() {
  return (
    <div className="h-screen min-h-[1080px] flex flex-col overflow-hidden border-2 border-b-0 border-[#f5df3f] font-['Noto_Sans','Noto_Sans_CJK_SC',sans-serif] text-xs">
      <div className="relative flex-1 flex flex-col border border-b-0 border-[#3a3a2a] bg-white">
        <Ribbon />
        <div className="flex-1 flex">
          <div className="w-[312px] shrink-0 flex flex-col pb-[23px] bg-white">
            <div className="flex-1 flex flex-col justify-end border-r border-b border-[#d0d0d0] pb-px pr-px">
              <ScrollBar thumb="w-[17px]" />
            </div>
          </div>
          <GraphicsView />
          <LayerPanel />
        </div>
        <StatusBar />
        <GroupDialog />
        <Pointer />
        <Stamp />
        <Watermark />
      </div>
    </div>
  );
}
